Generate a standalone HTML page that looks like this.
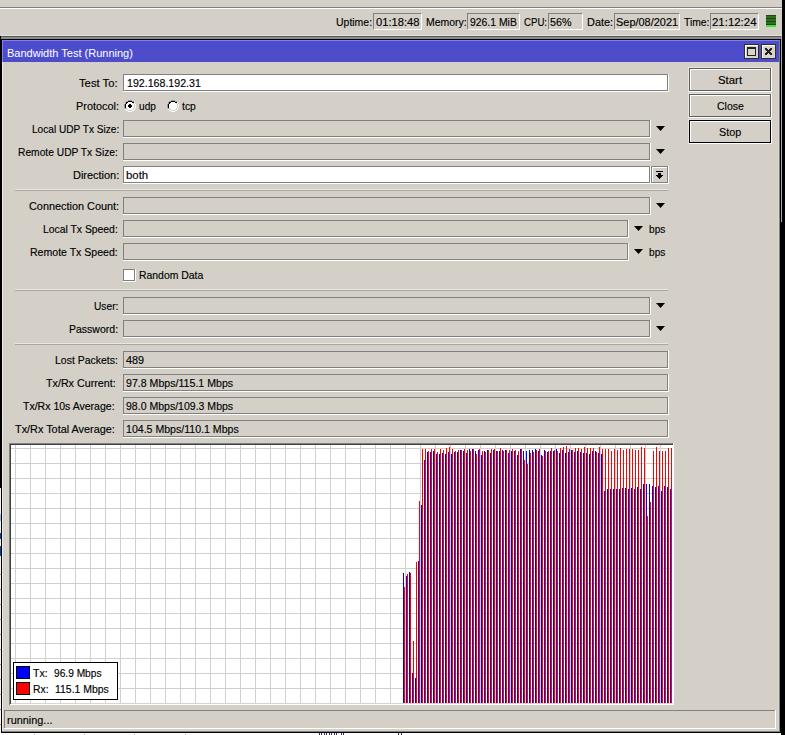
<!DOCTYPE html>
<html><head><meta charset="utf-8"><style>
html,body{margin:0;padding:0}
body{width:785px;height:735px;position:relative;overflow:hidden;background:#fff;font-family:"Liberation Sans", sans-serif}
.t{position:absolute;font-size:11px;line-height:13px;white-space:nowrap;transform-origin:0 0;-webkit-text-stroke:0.15px currentColor}
</style></head><body>
<div style="position:absolute;left:0px;top:0px;width:782px;height:39px;background:#d4d0c8"></div>
<div style="position:absolute;left:782px;top:0px;width:3px;height:735px;background:#000"></div>
<div style="position:absolute;left:0px;top:7px;width:782px;height:1px;background:#808080"></div>
<div style="position:absolute;left:0px;top:8px;width:782px;height:1px;background:#fff"></div>
<div style="position:absolute;left:373px;top:13px;width:49px;height:17px;box-sizing:border-box;border-top:1px solid #808080;border-left:1px solid #808080;border-bottom:1px solid #fff;border-right:1px solid #fff"></div>
<div style="position:absolute;left:467px;top:13px;width:53px;height:17px;box-sizing:border-box;border-top:1px solid #808080;border-left:1px solid #808080;border-bottom:1px solid #fff;border-right:1px solid #fff"></div>
<div style="position:absolute;left:548px;top:13px;width:35px;height:17px;box-sizing:border-box;border-top:1px solid #808080;border-left:1px solid #808080;border-bottom:1px solid #fff;border-right:1px solid #fff"></div>
<div style="position:absolute;left:614px;top:13px;width:66px;height:17px;box-sizing:border-box;border-top:1px solid #808080;border-left:1px solid #808080;border-bottom:1px solid #fff;border-right:1px solid #fff"></div>
<div style="position:absolute;left:710px;top:13px;width:49px;height:17px;box-sizing:border-box;border-top:1px solid #808080;border-left:1px solid #808080;border-bottom:1px solid #fff;border-right:1px solid #fff"></div>
<svg style="position:absolute;left:766px;top:15px" width="10" height="12"><rect width="10" height="12" fill="#2f6f1f"/><rect y="0" width="10" height="1" fill="#1e4514"/><rect y="3" width="10" height="1" fill="#1e4514"/><rect y="6" width="10" height="1" fill="#1e4514"/><rect y="9" width="10" height="1" fill="#1e4514"/><rect y="10" width="10" height="2" fill="#3de23d"/></svg>
<div style="position:absolute;left:1px;top:35px;width:781px;height:1px;background:#e4e0da"></div>
<div style="position:absolute;left:0px;top:36px;width:782px;height:1px;background:#5a5a5a"></div>
<div style="position:absolute;left:1px;top:37px;width:781px;height:2px;background:#8c8c8c"></div>
<div style="position:absolute;left:0px;top:36px;width:1px;height:452px;background:#000"></div>
<div style="position:absolute;left:0px;top:488px;width:1px;height:247px;background:#f4f4f4"></div>
<div style="position:absolute;left:0px;top:514px;width:1px;height:7px;background:#8fc0f0"></div>
<div style="position:absolute;left:0px;top:533px;width:1px;height:6px;background:#1040a0"></div>
<div style="position:absolute;left:0px;top:546px;width:1px;height:10px;background:#1040a0"></div>
<div style="position:absolute;left:0px;top:574px;width:1px;height:1px;background:#909090"></div>
<div style="position:absolute;left:0px;top:589px;width:1px;height:1px;background:#909090"></div>
<div style="position:absolute;left:0px;top:604px;width:1px;height:1px;background:#909090"></div>
<div style="position:absolute;left:0px;top:619px;width:1px;height:1px;background:#909090"></div>
<div style="position:absolute;left:0px;top:634px;width:1px;height:1px;background:#909090"></div>
<div style="position:absolute;left:0px;top:649px;width:1px;height:1px;background:#909090"></div>
<div style="position:absolute;left:0px;top:664px;width:1px;height:1px;background:#909090"></div>
<div style="position:absolute;left:0px;top:679px;width:1px;height:1px;background:#909090"></div>
<div style="position:absolute;left:0px;top:694px;width:1px;height:1px;background:#909090"></div>
<div style="position:absolute;left:0px;top:709px;width:1px;height:1px;background:#909090"></div>
<div style="position:absolute;left:0px;top:724px;width:1px;height:1px;background:#909090"></div>
<div style="position:absolute;left:0px;top:733px;width:782px;height:2px;background:#fff"></div>
<div style="position:absolute;left:34px;top:734px;width:1px;height:1px;background:#b0b0b0"></div>
<div style="position:absolute;left:84px;top:734px;width:1px;height:1px;background:#b0b0b0"></div>
<div style="position:absolute;left:134px;top:734px;width:1px;height:1px;background:#b0b0b0"></div>
<div style="position:absolute;left:185px;top:734px;width:1px;height:1px;background:#b0b0b0"></div>
<div style="position:absolute;left:319px;top:733px;width:1px;height:2px;background:#303060"></div>
<div style="position:absolute;left:321px;top:733px;width:1px;height:2px;background:#303060"></div>
<div style="position:absolute;left:324px;top:733px;width:1px;height:2px;background:#303060"></div>
<div style="position:absolute;left:326px;top:733px;width:1px;height:2px;background:#303060"></div>
<div style="position:absolute;left:329px;top:733px;width:1px;height:2px;background:#303060"></div>
<div style="position:absolute;left:331px;top:733px;width:1px;height:2px;background:#303060"></div>
<div style="position:absolute;left:334px;top:733px;width:1px;height:2px;background:#303060"></div>
<div style="position:absolute;left:336px;top:733px;width:1px;height:2px;background:#303060"></div>
<div style="position:absolute;left:341px;top:733px;width:1px;height:2px;background:#303060"></div>
<div style="position:absolute;left:343px;top:733px;width:1px;height:2px;background:#303060"></div>
<div style="position:absolute;left:398px;top:733px;width:1px;height:2px;background:#303060"></div>
<div style="position:absolute;left:401px;top:733px;width:1px;height:2px;background:#303060"></div>
<div style="position:absolute;left:1px;top:39px;width:780px;height:694px;box-sizing:border-box;border:1px solid #000;background:#d4d0c8"></div>
<div style="position:absolute;left:2px;top:40px;width:1px;height:692px;background:#eeeae4"></div>
<div style="position:absolute;left:779px;top:40px;width:1px;height:692px;background:#808080"></div>
<div style="position:absolute;left:778px;top:62px;width:1px;height:669px;background:#dcd8d0"></div>
<div style="position:absolute;left:781px;top:39px;width:1px;height:696px;background:#000"></div>
<div style="position:absolute;left:781px;top:36px;width:1px;height:186px;background:#a8a8a8"></div>
<div style="position:absolute;left:2px;top:731px;width:778px;height:1px;background:#808080"></div>
<div style="position:absolute;left:2px;top:40px;width:777px;height:22px;background:#4d4dcc;box-sizing:border-box;border-top:1px solid #8080ee;border-left:1px solid #8080ee"></div>
<div style="position:absolute;left:744px;top:44px;width:15px;height:15px;box-sizing:border-box;border:1px solid #2e2e22;background:#d8d4cc;box-shadow:inset 1px 1px 0 #fff"></div>
<div style="position:absolute;left:761px;top:44px;width:15px;height:15px;box-sizing:border-box;border:1px solid #2e2e22;background:#d8d4cc;box-shadow:inset 1px 1px 0 #fff"></div>
<svg style="position:absolute;left:744px;top:44px" width="15" height="15"><rect x="3.5" y="3.5" width="8" height="8" fill="none" stroke="#222" stroke-width="1"/><rect x="3" y="3" width="9" height="2" fill="#222"/></svg>
<svg style="position:absolute;left:765px;top:48px" width="7" height="7" shape-rendering="crispEdges"><rect x="0" y="0" width="1" height="1" fill="#222"/><rect x="1" y="0" width="1" height="1" fill="#222"/><rect x="5" y="0" width="1" height="1" fill="#222"/><rect x="6" y="0" width="1" height="1" fill="#222"/><rect x="0" y="1" width="1" height="1" fill="#222"/><rect x="1" y="1" width="1" height="1" fill="#222"/><rect x="2" y="1" width="1" height="1" fill="#222"/><rect x="4" y="1" width="1" height="1" fill="#222"/><rect x="5" y="1" width="1" height="1" fill="#222"/><rect x="6" y="1" width="1" height="1" fill="#222"/><rect x="1" y="2" width="1" height="1" fill="#222"/><rect x="2" y="2" width="1" height="1" fill="#222"/><rect x="3" y="2" width="1" height="1" fill="#222"/><rect x="4" y="2" width="1" height="1" fill="#222"/><rect x="5" y="2" width="1" height="1" fill="#222"/><rect x="2" y="3" width="1" height="1" fill="#222"/><rect x="3" y="3" width="1" height="1" fill="#222"/><rect x="4" y="3" width="1" height="1" fill="#222"/><rect x="1" y="4" width="1" height="1" fill="#222"/><rect x="2" y="4" width="1" height="1" fill="#222"/><rect x="3" y="4" width="1" height="1" fill="#222"/><rect x="4" y="4" width="1" height="1" fill="#222"/><rect x="5" y="4" width="1" height="1" fill="#222"/><rect x="0" y="5" width="1" height="1" fill="#222"/><rect x="1" y="5" width="1" height="1" fill="#222"/><rect x="2" y="5" width="1" height="1" fill="#222"/><rect x="4" y="5" width="1" height="1" fill="#222"/><rect x="5" y="5" width="1" height="1" fill="#222"/><rect x="6" y="5" width="1" height="1" fill="#222"/><rect x="0" y="6" width="1" height="1" fill="#222"/><rect x="1" y="6" width="1" height="1" fill="#222"/><rect x="5" y="6" width="1" height="1" fill="#222"/><rect x="6" y="6" width="1" height="1" fill="#222"/></svg>
<div style="position:absolute;left:123px;top:74px;width:545px;height:17px;box-sizing:border-box;border:1px solid #808080;background:#fff"></div><div style="position:absolute;left:123px;top:91px;width:546px;height:1px;background:#fff"></div><div style="position:absolute;left:668px;top:74px;width:1px;height:18px;background:#fff"></div>
<div style="position:absolute;left:123px;top:120px;width:527px;height:17px;box-sizing:border-box;border:1px solid #808080;background:#d4d0c8"></div><div style="position:absolute;left:123px;top:137px;width:528px;height:1px;background:#fff"></div><div style="position:absolute;left:650px;top:120px;width:1px;height:18px;background:#fff"></div>
<svg style="position:absolute;left:656px;top:126px" width="10" height="6"><path d="M0 0 H9 L4.5 5 Z" fill="#000"/></svg>
<div style="position:absolute;left:123px;top:143px;width:527px;height:17px;box-sizing:border-box;border:1px solid #808080;background:#d4d0c8"></div><div style="position:absolute;left:123px;top:160px;width:528px;height:1px;background:#fff"></div><div style="position:absolute;left:650px;top:143px;width:1px;height:18px;background:#fff"></div>
<svg style="position:absolute;left:656px;top:149px" width="10" height="6"><path d="M0 0 H9 L4.5 5 Z" fill="#000"/></svg>
<div style="position:absolute;left:123px;top:166px;width:527px;height:17px;box-sizing:border-box;border:1px solid #808080;background:#fff"></div><div style="position:absolute;left:123px;top:183px;width:528px;height:1px;background:#fff"></div><div style="position:absolute;left:650px;top:166px;width:1px;height:18px;background:#fff"></div>
<div style="position:absolute;left:651px;top:166px;width:17px;height:17px;box-sizing:border-box;border:1px solid #808080;background:#d4d0c8"></div><div style="position:absolute;left:651px;top:183px;width:18px;height:1px;background:#fff"></div><div style="position:absolute;left:668px;top:166px;width:1px;height:18px;background:#fff"></div>
<div style="position:absolute;left:652px;top:167px;width:15px;height:1px;background:#fff"></div><div style="position:absolute;left:652px;top:167px;width:1px;height:15px;background:#fff"></div>
<svg style="position:absolute;left:651px;top:166px" width="17" height="17" shape-rendering="crispEdges"><rect x="5" y="5" width="7" height="1" fill="#000"/><rect x="7" y="7" width="3" height="2" fill="#000"/><rect x="5" y="9" width="7" height="1"/><rect x="6" y="10" width="5" height="1"/><rect x="7" y="11" width="3" height="1"/><rect x="8" y="12" width="1" height="1"/></svg>
<div style="position:absolute;left:123px;top:197px;width:527px;height:17px;box-sizing:border-box;border:1px solid #808080;background:#d4d0c8"></div><div style="position:absolute;left:123px;top:214px;width:528px;height:1px;background:#fff"></div><div style="position:absolute;left:650px;top:197px;width:1px;height:18px;background:#fff"></div>
<svg style="position:absolute;left:656px;top:203px" width="10" height="6"><path d="M0 0 H9 L4.5 5 Z" fill="#000"/></svg>
<div style="position:absolute;left:123px;top:220px;width:505px;height:17px;box-sizing:border-box;border:1px solid #808080;background:#d4d0c8"></div><div style="position:absolute;left:123px;top:237px;width:506px;height:1px;background:#fff"></div><div style="position:absolute;left:628px;top:220px;width:1px;height:18px;background:#fff"></div>
<svg style="position:absolute;left:634px;top:226px" width="10" height="6"><path d="M0 0 H9 L4.5 5 Z" fill="#000"/></svg>
<div style="position:absolute;left:123px;top:243px;width:505px;height:17px;box-sizing:border-box;border:1px solid #808080;background:#d4d0c8"></div><div style="position:absolute;left:123px;top:260px;width:506px;height:1px;background:#fff"></div><div style="position:absolute;left:628px;top:243px;width:1px;height:18px;background:#fff"></div>
<svg style="position:absolute;left:634px;top:249px" width="10" height="6"><path d="M0 0 H9 L4.5 5 Z" fill="#000"/></svg>
<div style="position:absolute;left:123px;top:297px;width:527px;height:17px;box-sizing:border-box;border:1px solid #808080;background:#d4d0c8"></div><div style="position:absolute;left:123px;top:314px;width:528px;height:1px;background:#fff"></div><div style="position:absolute;left:650px;top:297px;width:1px;height:18px;background:#fff"></div>
<svg style="position:absolute;left:656px;top:303px" width="10" height="6"><path d="M0 0 H9 L4.5 5 Z" fill="#000"/></svg>
<div style="position:absolute;left:123px;top:320px;width:527px;height:17px;box-sizing:border-box;border:1px solid #808080;background:#d4d0c8"></div><div style="position:absolute;left:123px;top:337px;width:528px;height:1px;background:#fff"></div><div style="position:absolute;left:650px;top:320px;width:1px;height:18px;background:#fff"></div>
<svg style="position:absolute;left:656px;top:326px" width="10" height="6"><path d="M0 0 H9 L4.5 5 Z" fill="#000"/></svg>
<div style="position:absolute;left:123px;top:351px;width:545px;height:17px;box-sizing:border-box;border:1px solid #808080;background:#d4d0c8"></div><div style="position:absolute;left:123px;top:368px;width:546px;height:1px;background:#fff"></div><div style="position:absolute;left:668px;top:351px;width:1px;height:18px;background:#fff"></div>
<div style="position:absolute;left:123px;top:374px;width:545px;height:17px;box-sizing:border-box;border:1px solid #808080;background:#d4d0c8"></div><div style="position:absolute;left:123px;top:391px;width:546px;height:1px;background:#fff"></div><div style="position:absolute;left:668px;top:374px;width:1px;height:18px;background:#fff"></div>
<div style="position:absolute;left:123px;top:397px;width:545px;height:17px;box-sizing:border-box;border:1px solid #808080;background:#d4d0c8"></div><div style="position:absolute;left:123px;top:414px;width:546px;height:1px;background:#fff"></div><div style="position:absolute;left:668px;top:397px;width:1px;height:18px;background:#fff"></div>
<div style="position:absolute;left:123px;top:420px;width:545px;height:17px;box-sizing:border-box;border:1px solid #808080;background:#d4d0c8"></div><div style="position:absolute;left:123px;top:437px;width:546px;height:1px;background:#fff"></div><div style="position:absolute;left:668px;top:420px;width:1px;height:18px;background:#fff"></div>
<div style="position:absolute;left:15px;top:189px;width:653px;height:1px;background:#e9e7e3"></div>
<div style="position:absolute;left:15px;top:190px;width:653px;height:1px;background:#aaa6a0"></div>
<div style="position:absolute;left:15px;top:289px;width:653px;height:1px;background:#e9e7e3"></div>
<div style="position:absolute;left:15px;top:290px;width:653px;height:1px;background:#aaa6a0"></div>
<div style="position:absolute;left:15px;top:343px;width:653px;height:1px;background:#e9e7e3"></div>
<div style="position:absolute;left:15px;top:344px;width:653px;height:1px;background:#aaa6a0"></div>
<svg style="position:absolute;left:124px;top:100px" width="12" height="12" shape-rendering="crispEdges"><rect x="4" y="0" width="1" height="1" fill="#9a9a9a"/><rect x="5" y="0" width="1" height="1" fill="#9a9a9a"/><rect x="6" y="0" width="1" height="1" fill="#9a9a9a"/><rect x="7" y="0" width="1" height="1" fill="#9a9a9a"/><rect x="2" y="1" width="1" height="1" fill="#9a9a9a"/><rect x="3" y="1" width="1" height="1" fill="#9a9a9a"/><rect x="4" y="1" width="1" height="1" fill="#000"/><rect x="5" y="1" width="1" height="1" fill="#000"/><rect x="6" y="1" width="1" height="1" fill="#000"/><rect x="7" y="1" width="1" height="1" fill="#000"/><rect x="8" y="1" width="1" height="1" fill="#9a9a9a"/><rect x="9" y="1" width="1" height="1" fill="#9a9a9a"/><rect x="1" y="2" width="1" height="1" fill="#9a9a9a"/><rect x="2" y="2" width="1" height="1" fill="#000"/><rect x="3" y="2" width="1" height="1" fill="#000"/><rect x="4" y="2" width="1" height="1" fill="#fff"/><rect x="5" y="2" width="1" height="1" fill="#fff"/><rect x="6" y="2" width="1" height="1" fill="#fff"/><rect x="7" y="2" width="1" height="1" fill="#fff"/><rect x="8" y="2" width="1" height="1" fill="#000"/><rect x="9" y="2" width="1" height="1" fill="#000"/><rect x="10" y="2" width="1" height="1" fill="#fff"/><rect x="1" y="3" width="1" height="1" fill="#9a9a9a"/><rect x="2" y="3" width="1" height="1" fill="#000"/><rect x="3" y="3" width="1" height="1" fill="#fff"/><rect x="4" y="3" width="1" height="1" fill="#fff"/><rect x="5" y="3" width="1" height="1" fill="#fff"/><rect x="6" y="3" width="1" height="1" fill="#fff"/><rect x="7" y="3" width="1" height="1" fill="#fff"/><rect x="8" y="3" width="1" height="1" fill="#fff"/><rect x="9" y="3" width="1" height="1" fill="#d4d0c8"/><rect x="10" y="3" width="1" height="1" fill="#fff"/><rect x="0" y="4" width="1" height="1" fill="#9a9a9a"/><rect x="1" y="4" width="1" height="1" fill="#000"/><rect x="2" y="4" width="1" height="1" fill="#fff"/><rect x="3" y="4" width="1" height="1" fill="#fff"/><rect x="4" y="4" width="1" height="1" fill="#fff"/><rect x="5" y="4" width="1" height="1" fill="#000"/><rect x="6" y="4" width="1" height="1" fill="#000"/><rect x="7" y="4" width="1" height="1" fill="#fff"/><rect x="8" y="4" width="1" height="1" fill="#fff"/><rect x="9" y="4" width="1" height="1" fill="#fff"/><rect x="10" y="4" width="1" height="1" fill="#d4d0c8"/><rect x="11" y="4" width="1" height="1" fill="#fff"/><rect x="0" y="5" width="1" height="1" fill="#9a9a9a"/><rect x="1" y="5" width="1" height="1" fill="#000"/><rect x="2" y="5" width="1" height="1" fill="#fff"/><rect x="3" y="5" width="1" height="1" fill="#fff"/><rect x="4" y="5" width="1" height="1" fill="#000"/><rect x="5" y="5" width="1" height="1" fill="#000"/><rect x="6" y="5" width="1" height="1" fill="#000"/><rect x="7" y="5" width="1" height="1" fill="#000"/><rect x="8" y="5" width="1" height="1" fill="#fff"/><rect x="9" y="5" width="1" height="1" fill="#fff"/><rect x="10" y="5" width="1" height="1" fill="#d4d0c8"/><rect x="11" y="5" width="1" height="1" fill="#fff"/><rect x="0" y="6" width="1" height="1" fill="#9a9a9a"/><rect x="1" y="6" width="1" height="1" fill="#000"/><rect x="2" y="6" width="1" height="1" fill="#fff"/><rect x="3" y="6" width="1" height="1" fill="#fff"/><rect x="4" y="6" width="1" height="1" fill="#000"/><rect x="5" y="6" width="1" height="1" fill="#000"/><rect x="6" y="6" width="1" height="1" fill="#000"/><rect x="7" y="6" width="1" height="1" fill="#000"/><rect x="8" y="6" width="1" height="1" fill="#fff"/><rect x="9" y="6" width="1" height="1" fill="#fff"/><rect x="10" y="6" width="1" height="1" fill="#d4d0c8"/><rect x="11" y="6" width="1" height="1" fill="#fff"/><rect x="0" y="7" width="1" height="1" fill="#9a9a9a"/><rect x="1" y="7" width="1" height="1" fill="#000"/><rect x="2" y="7" width="1" height="1" fill="#fff"/><rect x="3" y="7" width="1" height="1" fill="#fff"/><rect x="4" y="7" width="1" height="1" fill="#fff"/><rect x="5" y="7" width="1" height="1" fill="#000"/><rect x="6" y="7" width="1" height="1" fill="#000"/><rect x="7" y="7" width="1" height="1" fill="#fff"/><rect x="8" y="7" width="1" height="1" fill="#fff"/><rect x="9" y="7" width="1" height="1" fill="#fff"/><rect x="10" y="7" width="1" height="1" fill="#d4d0c8"/><rect x="11" y="7" width="1" height="1" fill="#fff"/><rect x="1" y="8" width="1" height="1" fill="#9a9a9a"/><rect x="2" y="8" width="1" height="1" fill="#d4d0c8"/><rect x="3" y="8" width="1" height="1" fill="#fff"/><rect x="4" y="8" width="1" height="1" fill="#fff"/><rect x="5" y="8" width="1" height="1" fill="#fff"/><rect x="6" y="8" width="1" height="1" fill="#fff"/><rect x="7" y="8" width="1" height="1" fill="#fff"/><rect x="8" y="8" width="1" height="1" fill="#fff"/><rect x="9" y="8" width="1" height="1" fill="#d4d0c8"/><rect x="10" y="8" width="1" height="1" fill="#fff"/><rect x="1" y="9" width="1" height="1" fill="#fff"/><rect x="2" y="9" width="1" height="1" fill="#d4d0c8"/><rect x="3" y="9" width="1" height="1" fill="#d4d0c8"/><rect x="4" y="9" width="1" height="1" fill="#fff"/><rect x="5" y="9" width="1" height="1" fill="#fff"/><rect x="6" y="9" width="1" height="1" fill="#fff"/><rect x="7" y="9" width="1" height="1" fill="#fff"/><rect x="8" y="9" width="1" height="1" fill="#d4d0c8"/><rect x="9" y="9" width="1" height="1" fill="#d4d0c8"/><rect x="10" y="9" width="1" height="1" fill="#fff"/><rect x="2" y="10" width="1" height="1" fill="#fff"/><rect x="3" y="10" width="1" height="1" fill="#fff"/><rect x="4" y="10" width="1" height="1" fill="#d4d0c8"/><rect x="5" y="10" width="1" height="1" fill="#d4d0c8"/><rect x="6" y="10" width="1" height="1" fill="#d4d0c8"/><rect x="7" y="10" width="1" height="1" fill="#d4d0c8"/><rect x="8" y="10" width="1" height="1" fill="#fff"/><rect x="9" y="10" width="1" height="1" fill="#fff"/><rect x="4" y="11" width="1" height="1" fill="#fff"/><rect x="5" y="11" width="1" height="1" fill="#fff"/><rect x="6" y="11" width="1" height="1" fill="#fff"/><rect x="7" y="11" width="1" height="1" fill="#fff"/></svg>
<svg style="position:absolute;left:167px;top:100px" width="12" height="12" shape-rendering="crispEdges"><rect x="4" y="0" width="1" height="1" fill="#9a9a9a"/><rect x="5" y="0" width="1" height="1" fill="#9a9a9a"/><rect x="6" y="0" width="1" height="1" fill="#9a9a9a"/><rect x="7" y="0" width="1" height="1" fill="#9a9a9a"/><rect x="2" y="1" width="1" height="1" fill="#9a9a9a"/><rect x="3" y="1" width="1" height="1" fill="#9a9a9a"/><rect x="4" y="1" width="1" height="1" fill="#000"/><rect x="5" y="1" width="1" height="1" fill="#000"/><rect x="6" y="1" width="1" height="1" fill="#000"/><rect x="7" y="1" width="1" height="1" fill="#000"/><rect x="8" y="1" width="1" height="1" fill="#9a9a9a"/><rect x="9" y="1" width="1" height="1" fill="#9a9a9a"/><rect x="1" y="2" width="1" height="1" fill="#9a9a9a"/><rect x="2" y="2" width="1" height="1" fill="#000"/><rect x="3" y="2" width="1" height="1" fill="#000"/><rect x="4" y="2" width="1" height="1" fill="#fff"/><rect x="5" y="2" width="1" height="1" fill="#fff"/><rect x="6" y="2" width="1" height="1" fill="#fff"/><rect x="7" y="2" width="1" height="1" fill="#fff"/><rect x="8" y="2" width="1" height="1" fill="#000"/><rect x="9" y="2" width="1" height="1" fill="#000"/><rect x="10" y="2" width="1" height="1" fill="#fff"/><rect x="1" y="3" width="1" height="1" fill="#9a9a9a"/><rect x="2" y="3" width="1" height="1" fill="#000"/><rect x="3" y="3" width="1" height="1" fill="#fff"/><rect x="4" y="3" width="1" height="1" fill="#fff"/><rect x="5" y="3" width="1" height="1" fill="#fff"/><rect x="6" y="3" width="1" height="1" fill="#fff"/><rect x="7" y="3" width="1" height="1" fill="#fff"/><rect x="8" y="3" width="1" height="1" fill="#fff"/><rect x="9" y="3" width="1" height="1" fill="#d4d0c8"/><rect x="10" y="3" width="1" height="1" fill="#fff"/><rect x="0" y="4" width="1" height="1" fill="#9a9a9a"/><rect x="1" y="4" width="1" height="1" fill="#000"/><rect x="2" y="4" width="1" height="1" fill="#fff"/><rect x="3" y="4" width="1" height="1" fill="#fff"/><rect x="4" y="4" width="1" height="1" fill="#fff"/><rect x="5" y="4" width="1" height="1" fill="#fff"/><rect x="6" y="4" width="1" height="1" fill="#fff"/><rect x="7" y="4" width="1" height="1" fill="#fff"/><rect x="8" y="4" width="1" height="1" fill="#fff"/><rect x="9" y="4" width="1" height="1" fill="#fff"/><rect x="10" y="4" width="1" height="1" fill="#d4d0c8"/><rect x="11" y="4" width="1" height="1" fill="#fff"/><rect x="0" y="5" width="1" height="1" fill="#9a9a9a"/><rect x="1" y="5" width="1" height="1" fill="#000"/><rect x="2" y="5" width="1" height="1" fill="#fff"/><rect x="3" y="5" width="1" height="1" fill="#fff"/><rect x="4" y="5" width="1" height="1" fill="#fff"/><rect x="5" y="5" width="1" height="1" fill="#fff"/><rect x="6" y="5" width="1" height="1" fill="#fff"/><rect x="7" y="5" width="1" height="1" fill="#fff"/><rect x="8" y="5" width="1" height="1" fill="#fff"/><rect x="9" y="5" width="1" height="1" fill="#fff"/><rect x="10" y="5" width="1" height="1" fill="#d4d0c8"/><rect x="11" y="5" width="1" height="1" fill="#fff"/><rect x="0" y="6" width="1" height="1" fill="#9a9a9a"/><rect x="1" y="6" width="1" height="1" fill="#000"/><rect x="2" y="6" width="1" height="1" fill="#fff"/><rect x="3" y="6" width="1" height="1" fill="#fff"/><rect x="4" y="6" width="1" height="1" fill="#fff"/><rect x="5" y="6" width="1" height="1" fill="#fff"/><rect x="6" y="6" width="1" height="1" fill="#fff"/><rect x="7" y="6" width="1" height="1" fill="#fff"/><rect x="8" y="6" width="1" height="1" fill="#fff"/><rect x="9" y="6" width="1" height="1" fill="#fff"/><rect x="10" y="6" width="1" height="1" fill="#d4d0c8"/><rect x="11" y="6" width="1" height="1" fill="#fff"/><rect x="0" y="7" width="1" height="1" fill="#9a9a9a"/><rect x="1" y="7" width="1" height="1" fill="#000"/><rect x="2" y="7" width="1" height="1" fill="#fff"/><rect x="3" y="7" width="1" height="1" fill="#fff"/><rect x="4" y="7" width="1" height="1" fill="#fff"/><rect x="5" y="7" width="1" height="1" fill="#fff"/><rect x="6" y="7" width="1" height="1" fill="#fff"/><rect x="7" y="7" width="1" height="1" fill="#fff"/><rect x="8" y="7" width="1" height="1" fill="#fff"/><rect x="9" y="7" width="1" height="1" fill="#fff"/><rect x="10" y="7" width="1" height="1" fill="#d4d0c8"/><rect x="11" y="7" width="1" height="1" fill="#fff"/><rect x="1" y="8" width="1" height="1" fill="#9a9a9a"/><rect x="2" y="8" width="1" height="1" fill="#d4d0c8"/><rect x="3" y="8" width="1" height="1" fill="#fff"/><rect x="4" y="8" width="1" height="1" fill="#fff"/><rect x="5" y="8" width="1" height="1" fill="#fff"/><rect x="6" y="8" width="1" height="1" fill="#fff"/><rect x="7" y="8" width="1" height="1" fill="#fff"/><rect x="8" y="8" width="1" height="1" fill="#fff"/><rect x="9" y="8" width="1" height="1" fill="#d4d0c8"/><rect x="10" y="8" width="1" height="1" fill="#fff"/><rect x="1" y="9" width="1" height="1" fill="#fff"/><rect x="2" y="9" width="1" height="1" fill="#d4d0c8"/><rect x="3" y="9" width="1" height="1" fill="#d4d0c8"/><rect x="4" y="9" width="1" height="1" fill="#fff"/><rect x="5" y="9" width="1" height="1" fill="#fff"/><rect x="6" y="9" width="1" height="1" fill="#fff"/><rect x="7" y="9" width="1" height="1" fill="#fff"/><rect x="8" y="9" width="1" height="1" fill="#d4d0c8"/><rect x="9" y="9" width="1" height="1" fill="#d4d0c8"/><rect x="10" y="9" width="1" height="1" fill="#fff"/><rect x="2" y="10" width="1" height="1" fill="#fff"/><rect x="3" y="10" width="1" height="1" fill="#fff"/><rect x="4" y="10" width="1" height="1" fill="#d4d0c8"/><rect x="5" y="10" width="1" height="1" fill="#d4d0c8"/><rect x="6" y="10" width="1" height="1" fill="#d4d0c8"/><rect x="7" y="10" width="1" height="1" fill="#d4d0c8"/><rect x="8" y="10" width="1" height="1" fill="#fff"/><rect x="9" y="10" width="1" height="1" fill="#fff"/><rect x="4" y="11" width="1" height="1" fill="#fff"/><rect x="5" y="11" width="1" height="1" fill="#fff"/><rect x="6" y="11" width="1" height="1" fill="#fff"/><rect x="7" y="11" width="1" height="1" fill="#fff"/></svg>
<div style="position:absolute;left:123px;top:269px;width:12px;height:12px;box-sizing:border-box;border:1px solid #808080;background:#fff"></div>
<div style="position:absolute;left:123px;top:281px;width:13px;height:1px;background:#fff"></div>
<div style="position:absolute;left:135px;top:269px;width:1px;height:13px;background:#fff"></div>
<div style="position:absolute;left:688px;top:67px;width:84px;height:1px;background:#e6e2dc"></div><div style="position:absolute;left:688px;top:67px;width:1px;height:25px;background:#e6e2dc"></div><div style="position:absolute;left:689px;top:68px;width:82px;height:23px;box-sizing:border-box;border:1px solid #5e5e5e;background:#d4d0c8;box-shadow:inset 1px 1px 0 #fff"></div><div style="position:absolute;left:689px;top:91px;width:83px;height:1px;background:#fff"></div><div style="position:absolute;left:771px;top:68px;width:1px;height:24px;background:#fff"></div>
<div style="position:absolute;left:688px;top:93px;width:84px;height:1px;background:#e6e2dc"></div><div style="position:absolute;left:688px;top:93px;width:1px;height:25px;background:#e6e2dc"></div><div style="position:absolute;left:689px;top:94px;width:82px;height:23px;box-sizing:border-box;border:1px solid #5e5e5e;background:#d4d0c8;box-shadow:inset 1px 1px 0 #fff"></div><div style="position:absolute;left:689px;top:117px;width:83px;height:1px;background:#fff"></div><div style="position:absolute;left:771px;top:94px;width:1px;height:24px;background:#fff"></div>
<div style="position:absolute;left:688px;top:119px;width:84px;height:1px;background:#e6e2dc"></div><div style="position:absolute;left:688px;top:119px;width:1px;height:25px;background:#e6e2dc"></div><div style="position:absolute;left:689px;top:120px;width:82px;height:23px;box-sizing:border-box;border:1px solid #000;background:#d4d0c8;box-shadow:inset 1px 1px 0 #fff"></div><div style="position:absolute;left:689px;top:143px;width:83px;height:1px;background:#fff"></div><div style="position:absolute;left:771px;top:120px;width:1px;height:24px;background:#fff"></div>
<div style="position:absolute;left:9px;top:443px;width:665px;height:1px;background:#808080"></div>
<div style="position:absolute;left:9px;top:443px;width:1px;height:262px;background:#808080"></div>
<div style="position:absolute;left:10px;top:444px;width:663px;height:1px;background:#404040"></div>
<div style="position:absolute;left:10px;top:444px;width:1px;height:260px;background:#404040"></div>
<div style="position:absolute;left:11px;top:445px;width:662px;height:259px;background:#fff"></div>
<div style="position:absolute;left:10px;top:704px;width:664px;height:1px;background:#fff"></div>
<div style="position:absolute;left:11px;top:703px;width:662px;height:1px;background:#d8d4cc"></div>
<div style="position:absolute;left:673px;top:443px;width:1px;height:262px;background:#fff"></div>
<svg style="position:absolute;left:0;top:0" width="785" height="735"><path d="M15.5 445V703M30.5 445V703M45.5 445V703M60.5 445V703M75.5 445V703M90.5 445V703M105.5 445V703M120.5 445V703M135.5 445V703M150.5 445V703M165.5 445V703M180.5 445V703M195.5 445V703M210.5 445V703M225.5 445V703M240.5 445V703M255.5 445V703M270.5 445V703M285.5 445V703M300.5 445V703M315.5 445V703M330.5 445V703M345.5 445V703M360.5 445V703M375.5 445V703M390.5 445V703M405.5 445V703M420.5 445V703M435.5 445V703M450.5 445V703M465.5 445V703M480.5 445V703M495.5 445V703M510.5 445V703M525.5 445V703M540.5 445V703M555.5 445V703M570.5 445V703M585.5 445V703M600.5 445V703M615.5 445V703M630.5 445V703M645.5 445V703M660.5 445V703M11 448.5H672M11 463.5H672M11 478.5H672M11 493.5H672M11 508.5H672M11 523.5H672M11 538.5H672M11 553.5H672M11 568.5H672M11 583.5H672M11 598.5H672M11 613.5H672M11 628.5H672M11 643.5H672M11 658.5H672M11 673.5H672M11 688.5H672" stroke="#d0d0d0" stroke-width="1"/><path d="M403.5 573V703M406.5 576V703M409.5 572V703M412.5 673V703M415.5 678V703M418.5 561V703M421.5 505V703M424.5 460V703M427.5 452V703M430.5 452V703M433.5 451V703M436.5 454V703M439.5 454V703M442.5 453V703M445.5 454V703M448.5 452V703M451.5 454V703M454.5 452V703M457.5 452V703M460.5 450V703M463.5 451V703M466.5 453V703M469.5 449V703M472.5 449V703M475.5 451V703M478.5 450V703M481.5 455V703M484.5 451V703M487.5 450V703M490.5 453V703M493.5 450V703M496.5 451V703M499.5 451V703M502.5 450V703M505.5 450V703M508.5 453V703M511.5 451V703M514.5 451V703M517.5 455V703M520.5 449V703M523.5 451V703M526.5 451V703M529.5 450V703M532.5 450V703M535.5 449V703M538.5 451V703M541.5 455V703M544.5 450V703M547.5 452V703M550.5 451V703M553.5 451V703M556.5 449V703M559.5 453V703M562.5 450V703M565.5 453V703M568.5 452V703M571.5 450V703M574.5 452V703M577.5 451V703M580.5 452V703M583.5 453V703M586.5 453V703M589.5 454V703M592.5 451V703M595.5 451V703M598.5 453V703M601.5 454V703M604.5 491V703M607.5 489V703M610.5 489V703M613.5 489V703M616.5 489V703M619.5 489V703M622.5 488V703M625.5 488V703M628.5 489V703M631.5 488V703M634.5 489V703M637.5 487V703M640.5 489V703M643.5 484V703M646.5 484V703M649.5 484V703M652.5 486V703M655.5 487V703M658.5 486V703M661.5 491V703M664.5 486V703M667.5 487V703M670.5 489V703" stroke="#0000ff" stroke-width="1"/><path d="M404.5 587V703M407.5 574V703M410.5 573V703M413.5 641V703M416.5 562V703M419.5 501V703M422.5 449V703M425.5 449V703M428.5 451V703M431.5 449V703M434.5 449V703M437.5 452V703M440.5 449V703M443.5 450V703M446.5 448V703M449.5 447V703M452.5 449V703M455.5 451V703M458.5 450V703M461.5 450V703M464.5 449V703M467.5 450V703M470.5 451V703M473.5 449V703M476.5 454V703M479.5 449V703M482.5 451V703M485.5 452V703M488.5 450V703M491.5 449V703M494.5 449V703M497.5 451V703M500.5 448V703M503.5 451V703M506.5 450V703M509.5 450V703M512.5 449V703M515.5 450V703M518.5 451V703M521.5 449V703M524.5 460V703M527.5 464V703M530.5 453V703M533.5 452V703M536.5 450V703M539.5 449V703M542.5 456V703M545.5 451V703M548.5 451V703M551.5 448V703M554.5 450V703M557.5 451V703M560.5 448V703M563.5 447V703M566.5 446V703M569.5 449V703M572.5 450V703M575.5 448V703M578.5 448V703M581.5 449V703M584.5 447V703M587.5 448V703M590.5 448V703M593.5 448V703M596.5 452V703M599.5 447V703M602.5 449V703M605.5 449V703M608.5 449V703M611.5 451V703M614.5 449V703M617.5 450V703M620.5 448V703M623.5 450V703M626.5 449V703M629.5 449V703M632.5 449V703M635.5 450V703M638.5 450V703M641.5 447V703M644.5 448V703M647.5 516V703M650.5 502V703M653.5 451V703M656.5 447V703M659.5 451V703M662.5 451V703M665.5 451V703M668.5 448V703M671.5 448V703" stroke="#ff0000" stroke-width="1"/></svg>
<div style="position:absolute;left:13px;top:662px;width:105px;height:38px;box-sizing:border-box;border:1px solid #000;background:#fff"></div>
<div style="position:absolute;left:16px;top:666px;width:14px;height:13px;box-sizing:border-box;border:1px solid #000;background:#0000ff"></div>
<div style="position:absolute;left:16px;top:682px;width:14px;height:13px;box-sizing:border-box;border:1px solid #000;background:#ff0000"></div>
<div style="position:absolute;left:4px;top:710px;width:771px;height:18px;box-sizing:border-box;border-top:1px solid #808080;border-left:1px solid #808080"></div>
<div style="position:absolute;left:4px;top:728px;width:772px;height:1px;background:#fff"></div>
<div style="position:absolute;left:775px;top:710px;width:1px;height:19px;background:#fff"></div>
<div class="t" style="left:336.40px;top:16px;color:#000;transform:scaleX(0.9513)">Uptime:</div>
<div class="t" style="left:375.60px;top:16px;color:#000;transform:scaleX(1.0164)">01:18:48</div>
<div class="t" style="left:426.00px;top:16px;color:#000;transform:scaleX(0.9526)">Memory:</div>
<div class="t" style="left:469.50px;top:16px;color:#000;transform:scaleX(0.9453)">926.1 MiB</div>
<div class="t" style="left:524.00px;top:16px;color:#000;transform:scaleX(0.8770)">CPU:</div>
<div class="t" style="left:550.00px;top:16px;color:#000;transform:scaleX(0.9759)">56%</div>
<div class="t" style="left:587.30px;top:16px;color:#000;transform:scaleX(0.9948)">Date:</div>
<div class="t" style="left:616.00px;top:16px;color:#000;transform:scaleX(0.9956)">Sep/08/2021</div>
<div class="t" style="left:684.40px;top:16px;color:#000;transform:scaleX(0.9395)">Time:</div>
<div class="t" style="left:711.80px;top:16px;color:#000;transform:scaleX(1.0398)">21:12:24</div>
<div class="t" style="left:6.80px;top:47px;color:#fff;-webkit-text-stroke:0;transform:scaleX(1.0008)">Bandwidth Test (Running)</div>
<div class="t" style="left:79.40px;top:77px;color:#000;transform:scaleX(1.0225)">Test To:</div>
<div class="t" style="left:76.30px;top:100px;color:#000;transform:scaleX(0.9896)">Protocol:</div>
<div class="t" style="left:31.50px;top:123px;color:#000;transform:scaleX(0.9181)">Local UDP Tx Size:</div>
<div class="t" style="left:18.40px;top:146px;color:#000;transform:scaleX(0.9319)">Remote UDP Tx Size:</div>
<div class="t" style="left:73.20px;top:169px;color:#000;transform:scaleX(0.9956)">Direction:</div>
<div class="t" style="left:29.10px;top:200px;color:#000;transform:scaleX(0.9884)">Connection Count:</div>
<div class="t" style="left:43.30px;top:223px;color:#000;transform:scaleX(0.9429)">Local Tx Speed:</div>
<div class="t" style="left:30.30px;top:246px;color:#000;transform:scaleX(0.9590)">Remote Tx Speed:</div>
<div class="t" style="left:93.70px;top:300px;color:#000;transform:scaleX(0.9266)">User:</div>
<div class="t" style="left:69.00px;top:323px;color:#000;transform:scaleX(0.9552)">Password:</div>
<div class="t" style="left:55.20px;top:354px;color:#000;transform:scaleX(0.9519)">Lost Packets:</div>
<div class="t" style="left:46.40px;top:377px;color:#000;transform:scaleX(0.9740)">Tx/Rx Current:</div>
<div class="t" style="left:22.70px;top:400px;color:#000;transform:scaleX(0.9560)">Tx/Rx 10s Average:</div>
<div class="t" style="left:15.40px;top:423px;color:#000;transform:scaleX(0.9878)">Tx/Rx Total Average:</div>
<div class="t" style="left:126.90px;top:77px;color:#000;transform:scaleX(0.9654)">192.168.192.31</div>
<div class="t" style="left:139.40px;top:100px;color:#000;transform:scaleX(0.9213)">udp</div>
<div class="t" style="left:182.20px;top:100px;color:#000;transform:scaleX(0.9412)">tcp</div>
<div class="t" style="left:126.10px;top:169px;color:#000;transform:scaleX(1.0333)">both</div>
<div class="t" style="left:139.10px;top:269px;color:#000;transform:scaleX(0.9469)">Random Data</div>
<div class="t" style="left:649.20px;top:223px;color:#000;transform:scaleX(0.9213)">bps</div>
<div class="t" style="left:649.20px;top:246px;color:#000;transform:scaleX(0.9213)">bps</div>
<div class="t" style="left:126.30px;top:354px;color:#000;transform:scaleX(0.9871)">489</div>
<div class="t" style="left:126.30px;top:377px;color:#000;transform:scaleX(0.9643)">97.8 Mbps/115.1 Mbps</div>
<div class="t" style="left:126.30px;top:400px;color:#000;transform:scaleX(0.9573)">98.0 Mbps/109.3 Mbps</div>
<div class="t" style="left:126.30px;top:423px;color:#000;transform:scaleX(0.9617)">104.5 Mbps/110.1 Mbps</div>
<div class="t" style="left:718.00px;top:74px;color:#000;transform:scaleX(1.0357)">Start</div>
<div class="t" style="left:717.00px;top:100px;color:#000;transform:scaleX(0.9534)">Close</div>
<div class="t" style="left:718.90px;top:126px;color:#000;transform:scaleX(0.9773)">Stop</div>
<div class="t" style="left:32.50px;top:667px;color:#000;transform:scaleX(0.9527)">Tx:</div>
<div class="t" style="left:53.60px;top:667px;color:#000;transform:scaleX(0.9255)">96.9 Mbps</div>
<div class="t" style="left:32.50px;top:683px;color:#000;transform:scaleX(0.9426)">Rx:</div>
<div class="t" style="left:54.60px;top:683px;color:#000;transform:scaleX(0.9499)">115.1 Mbps</div>
<div class="t" style="left:7.10px;top:714px;color:#000;transform:scaleX(0.9911)">running...</div>
</body></html>
